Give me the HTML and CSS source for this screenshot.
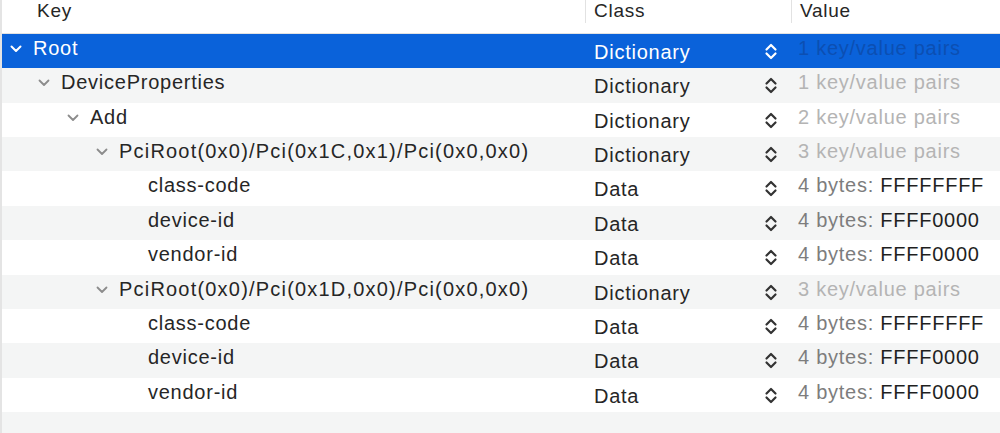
FILE: index.html
```html
<!DOCTYPE html>
<html lang="en">
<head>
  <meta charset="UTF-8">
  <title>Property List</title>
  <link rel="stylesheet" href="styles.css">
</head>
<body>
  <div class="outline">
    <div class="head">
      <div class="col key">Key</div>
      <div class="col cls">Class</div>
      <div class="col val">Value</div>
    </div>

    <div class="row selected">
      <div class="key lvl0"><span class="disc open"></span>Root</div>
      <div class="cls">Dictionary<span class="step"></span></div>
      <div class="val muted">1 key/value pairs</div>
    </div>
    <div class="row">
      <div class="key lvl1"><span class="disc open"></span>DeviceProperties</div>
      <div class="cls">Dictionary<span class="step"></span></div>
      <div class="val muted">1 key/value pairs</div>
    </div>
    <div class="row">
      <div class="key lvl2"><span class="disc open"></span>Add</div>
      <div class="cls">Dictionary<span class="step"></span></div>
      <div class="val muted">2 key/value pairs</div>
    </div>
    <div class="row">
      <div class="key lvl3"><span class="disc open"></span><span class="path">PciRoot(0x0)/Pci(0x1C,0x1)/Pci(0x0,0x0)</span></div>
      <div class="cls">Dictionary<span class="step"></span></div>
      <div class="val muted">3 key/value pairs</div>
    </div>
    <div class="row">
      <div class="key lvl4">class-code</div>
      <div class="cls">Data<span class="step"></span></div>
      <div class="val"><span class="size">4 bytes:</span> FFFFFFFF</div>
    </div>
    <div class="row">
      <div class="key lvl4">device-id</div>
      <div class="cls">Data<span class="step"></span></div>
      <div class="val"><span class="size">4 bytes:</span> FFFF0000</div>
    </div>
    <div class="row">
      <div class="key lvl4">vendor-id</div>
      <div class="cls">Data<span class="step"></span></div>
      <div class="val"><span class="size">4 bytes:</span> FFFF0000</div>
    </div>
    <div class="row">
      <div class="key lvl3"><span class="disc open"></span><span class="path">PciRoot(0x0)/Pci(0x1D,0x0)/Pci(0x0,0x0)</span></div>
      <div class="cls">Dictionary<span class="step"></span></div>
      <div class="val muted">3 key/value pairs</div>
    </div>
    <div class="row">
      <div class="key lvl4">class-code</div>
      <div class="cls">Data<span class="step"></span></div>
      <div class="val"><span class="size">4 bytes:</span> FFFFFFFF</div>
    </div>
    <div class="row">
      <div class="key lvl4">device-id</div>
      <div class="cls">Data<span class="step"></span></div>
      <div class="val"><span class="size">4 bytes:</span> FFFF0000</div>
    </div>
    <div class="row">
      <div class="key lvl4">vendor-id</div>
      <div class="cls">Data<span class="step"></span></div>
      <div class="val"><span class="size">4 bytes:</span> FFFF0000</div>
    </div>
    <div class="row filler"></div>
  </div>
</body>
</html>
```

FILE: styles.css
```css
body {
  margin: 0;
  background: #fff;
  font-family: "Liberation Sans", Arial, sans-serif;
  font-size: 20px;
  letter-spacing: 0.75px;
  color: #262626;
}
.outline {
  border-left: 2px solid #e4e4e4;
  height: 433px;
  overflow: hidden;
}
.head,
.row {
  display: grid;
  grid-template-columns: 583px 206px 1fr;
}
.head {
  height: 33px;
  border-bottom: 1px solid #e2e2e2;
  font-size: 19px;
}
.head .col {
  height: 23px;
  line-height: 22px;
}
.head .key {
  padding-left: 35px;
}
.head .cls,
.head .val {
  border-left: 1px solid #e2e2e2;
  padding-left: 8px;
}
.row {
  height: 34.36px;
  line-height: 28px;
  white-space: nowrap;
}
.row:nth-child(odd) {
  background: #f4f5f5;
}
.row.selected {
  background: #0a62da;
  color: #fff;
}
.row .key {
  display: flex;
  align-items: center;
  height: 28px;
}
.lvl0 { padding-left: 8px; }
.lvl1 { padding-left: 36px; }
.lvl2 { padding-left: 65px; }
.lvl3 { padding-left: 94px; }
.lvl4 { padding-left: 146px; }

.path {
  letter-spacing: 1.2px;
}

/* disclosure triangle, drawn as a chevron */
.disc {
  width: 12px;
  height: 8px;
  margin-right: 11px;
  margin-top: 2px;
  background: no-repeat center / 12px 8px
    url("data:image/svg+xml;utf8,<svg xmlns='http://www.w3.org/2000/svg' viewBox='0 0 12 8'><polyline points='1.5,1.5 6,6 10.5,1.5' fill='none' stroke='%238c8c8c' stroke-width='1.8' stroke-linecap='round' stroke-linejoin='round'/></svg>");
}
.selected .disc {
  background-image: url("data:image/svg+xml;utf8,<svg xmlns='http://www.w3.org/2000/svg' viewBox='0 0 12 8'><polyline points='1.5,1.5 6,6 10.5,1.5' fill='none' stroke='white' stroke-width='2' stroke-linecap='round' stroke-linejoin='round'/></svg>");
}
.row .cls {
  position: relative;
  padding-left: 9px;
  padding-top: 4px;
}
/* popup stepper arrows */
.step {
  position: absolute;
  right: 13px;
  top: 7px;
  width: 14px;
  height: 21px;
  background: no-repeat center / 14px 21px
    url("data:image/svg+xml;utf8,<svg xmlns='http://www.w3.org/2000/svg' viewBox='0 0 14 21'><polyline points='2.5,8.5 7,4 11.5,8.5' fill='none' stroke='%23333' stroke-width='2.2' stroke-linecap='round' stroke-linejoin='round'/><polyline points='2.5,12.5 7,17 11.5,12.5' fill='none' stroke='%23333' stroke-width='2.2' stroke-linecap='round' stroke-linejoin='round'/></svg>");
}
.selected .step {
  background-image: url("data:image/svg+xml;utf8,<svg xmlns='http://www.w3.org/2000/svg' viewBox='0 0 14 21'><polyline points='2.5,8.5 7,4 11.5,8.5' fill='none' stroke='white' stroke-width='2.2' stroke-linecap='round' stroke-linejoin='round'/><polyline points='2.5,12.5 7,17 11.5,12.5' fill='none' stroke='white' stroke-width='2.2' stroke-linecap='round' stroke-linejoin='round'/></svg>");
}
.row .val {
  padding-left: 7px;
  color: #1f1f1f;
}
.val.muted {
  color: #b4b4b4;
}
.selected .val.muted {
  color: #0c4fb2;
}
.size {
  color: #7d7d7d;
}
```
